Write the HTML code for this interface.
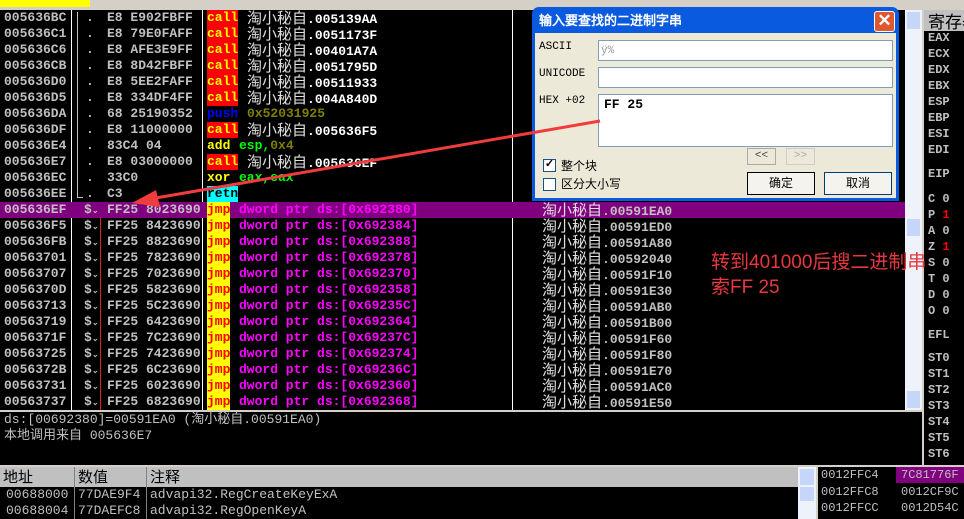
<!DOCTYPE html>
<html><head><meta charset="utf-8"><style>
*{margin:0;padding:0;box-sizing:border-box}
body{width:964px;height:519px;overflow:hidden;background:#000;position:relative;font-family:"Liberation Mono","WenQuanYi Zen Hei",monospace;font-size:13px;font-weight:bold;color:#c0c0c0}
.a{position:absolute;white-space:pre;line-height:16px}
.r{position:absolute;left:0;width:905px;height:16px}
.cj{font-family:"WenQuanYi Zen Hei","Noto Sans CJK SC",monospace;font-weight:normal;color:#e0e0e0}
.b{position:absolute;background:#c0c0c0}
</style></head><body>
<div class="b" style="left:0;top:0;width:964px;height:10px;background:#d4d0c8"></div>
<div class="b" style="left:0;top:0;width:90px;height:7px;background:#ffff00"></div>
<div class="b" style="left:71px;top:10px;width:1px;height:400px;background:#fff"></div>
<div class="b" style="left:202px;top:10px;width:1px;height:400px;background:#fff"></div>
<div class="b" style="left:512px;top:10px;width:1px;height:400px;background:#fff"></div>
<div class="b" style="left:77px;top:12px;width:1px;height:186px;background:#c0c0c0"></div>
<div class="b" style="left:77px;top:197px;width:6px;height:1px;background:#c0c0c0"></div>
<div class="b" style="left:100px;top:210px;width:1px;height:200px;background:#e02020"></div>
<div class="r" style="top:202px;background:#800080"></div>
<div class="b" style="left:905px;top:10px;width:17px;height:400px;background:#eef2fb"></div>
<div class="b" style="left:907px;top:12px;width:13px;height:17px;background:#c6d6f8"></div>
<div class="b" style="left:907px;top:219px;width:13px;height:17px;background:#c6d6f8"></div>
<div class="b" style="left:907px;top:391px;width:13px;height:17px;background:#c6d6f8"></div>
<div class="b" style="left:922px;top:10px;width:2px;height:455px;background:#d4d0c8"></div>
<div id="rows"></div>
<div class="b" style="left:0;top:410px;width:922px;height:2px;background:#d4d0c8"></div>
<div class="a" style="left:4px;top:410px;font-weight:normal">ds:[00692380]=00591EA0 (<span class="cj" style="color:#c0c0c0">淘小秘自</span>.00591EA0)</div>
<div class="a" style="left:4px;top:426px;font-weight:normal"><span class="cj" style="color:#c0c0c0">本地调用来自</span> 005636E7</div>
<div class="b" style="left:0;top:465px;width:964px;height:2px;background:#d4d0c8"></div>
<div class="b" style="left:0;top:467px;width:798px;height:20px;background:#c0c0c0"></div>
<div class="b" style="left:74px;top:467px;width:1px;height:52px;background:#808080"></div>
<div class="b" style="left:146px;top:467px;width:1px;height:52px;background:#808080"></div>
<div class="a cj" style="left:3px;top:468px;color:#000;font-size:15px;line-height:18px">地址</div>
<div class="a cj" style="left:78px;top:468px;color:#000;font-size:15px;line-height:18px">数值</div>
<div class="a cj" style="left:150px;top:468px;color:#000;font-size:15px;line-height:18px">注释</div>
<div class="a" style="left:6px;top:487px;font-weight:normal">00688000</div><div class="a" style="left:78px;top:487px;font-weight:normal">77DAE9F4</div><div class="a" style="left:150px;top:487px;font-weight:normal">advapi32.RegCreateKeyExA</div>
<div class="a" style="left:6px;top:503px;font-weight:normal">00688004</div><div class="a" style="left:78px;top:503px;font-weight:normal">77DAEFC8</div><div class="a" style="left:150px;top:503px;font-weight:normal">advapi32.RegOpenKeyA</div>
<div class="b" style="left:798px;top:467px;width:18px;height:52px;background:#eef2fb"></div>
<div class="b" style="left:800px;top:469px;width:14px;height:16px;background:#c6d6f8"></div>
<div class="b" style="left:800px;top:487px;width:14px;height:14px;background:#c6d6f8"></div>
<div class="b" style="left:816px;top:467px;width:2px;height:52px;background:#d4d0c8"></div>
<div class="b" style="left:896px;top:467px;width:68px;height:16px;background:#800080"></div>
<div class="a" style="left:821px;top:467px;font-weight:normal;font-size:12px">0012FFC4</div><div class="a" style="left:901px;top:467px;font-weight:normal;font-size:12px">7C81776F</div>
<div class="a" style="left:821px;top:484px;font-weight:normal;font-size:12px">0012FFC8</div><div class="a" style="left:901px;top:484px;font-weight:normal;font-size:12px">0012CF9C</div>
<div class="a" style="left:821px;top:500px;font-weight:normal;font-size:12px">0012FFCC</div><div class="a" style="left:901px;top:500px;font-weight:normal;font-size:12px">0012D54C</div>
<div class="b" style="left:924px;top:10px;width:40px;height:21px;background:#c0c0c0"></div>
<div class="a cj" style="left:928px;top:11px;color:#000;font-size:17px;line-height:20px">寄存器</div>
<div id="regs"></div>
<div class="a" style="left:711px;top:250px;color:#e8383d;font-family:'WenQuanYi Zen Hei','Liberation Sans',sans-serif;font-size:19px;line-height:25px;font-weight:normal">转到401000后搜二进制串<br>索FF 25</div>
<div class="b" style="left:532px;top:7px;width:367px;height:194px;background:#0a5ae0;border-radius:7px 7px 0 0"></div>
<div class="a" style="left:539px;top:12px;color:#fff;font-family:'WenQuanYi Zen Hei',sans-serif;font-size:13px;line-height:18px">输入要查找的二进制字串</div>
<div class="b" style="left:874px;top:11px;width:21px;height:21px;background:#e0562e;border:1px solid #fff;border-radius:3px;color:#fff;font-size:17px;line-height:18px;text-align:center;font-family:'Liberation Sans'">✕</div>
<div class="b" style="left:535px;top:33px;width:361px;height:165px;background:#ece9d8"></div>
<div class="a" style="left:539px;top:39px;color:#000;font-size:11px;font-weight:normal">ASCII</div>
<div class="a" style="left:539px;top:66px;color:#000;font-size:11px;font-weight:normal">UNICODE</div>
<div class="a" style="left:539px;top:93px;color:#000;font-size:11px;font-weight:normal">HEX +02</div>
<div class="b" style="left:598px;top:40px;width:295px;height:21px;background:#fff;border:1px solid #7f9db9"></div>
<div class="a" style="left:601px;top:43px;color:#999;font-size:11px;font-weight:normal">ÿ%</div>
<div class="b" style="left:598px;top:67px;width:295px;height:21px;background:#fff;border:1px solid #7f9db9"></div>
<div class="b" style="left:598px;top:94px;width:295px;height:53px;background:#fff;border:1px solid #7f9db9"></div>
<div class="a" style="left:604px;top:97px;color:#000;font-size:13px">FF 25</div>
<div class="b" style="left:747px;top:148px;width:29px;height:17px;background:#ece9d8;border:1px solid #aaa;color:#444;font-size:11px;line-height:14px;text-align:center;font-weight:normal">&lt;&lt;</div>
<div class="b" style="left:786px;top:148px;width:29px;height:17px;background:#ece9d8;border:1px solid #ccc;color:#aaa;font-size:11px;line-height:14px;text-align:center;font-weight:normal">&gt;&gt;</div>
<div class="b" style="left:543px;top:159px;width:13px;height:13px;background:#fff;border:1px solid #1c5180;color:#000;font-size:11px;line-height:11px;text-align:center">✓</div>
<div class="a cj" style="left:561px;top:158px;color:#000;font-size:12px">整个块</div>
<div class="b" style="left:543px;top:178px;width:13px;height:13px;background:#fff;border:1px solid #1c5180"></div>
<div class="a cj" style="left:561px;top:176px;color:#000;font-size:12px">区分大小写</div>
<div class="b" style="left:747px;top:172px;width:68px;height:23px;background:#f4f3ee;border:1px solid #000;color:#000;font-size:12px;line-height:20px;text-align:center;font-family:'WenQuanYi Zen Hei',sans-serif;font-weight:normal">确定</div>
<div class="b" style="left:824px;top:172px;width:68px;height:23px;background:#f4f3ee;border:1px solid #003c74;color:#000;font-size:12px;line-height:20px;text-align:center;font-family:'WenQuanYi Zen Hei',sans-serif;font-weight:normal">取消</div>
<svg style="position:absolute;left:0;top:0" width="964" height="519"><line x1="600" y1="121" x2="150" y2="199" stroke="#f03c3c" stroke-width="3"/><polygon points="132,203 156,190 160,207" fill="#f03c3c"/></svg>
<script>
var d=[["005636BC","E8 E902FBFF","call",".005139AA"],["005636C1","E8 79E0FAFF","call",".0051173F"],["005636C6","E8 AFE3E9FF","call",".00401A7A"],["005636CB","E8 8D42FBFF","call",".0051795D"],["005636D0","E8 5EE2FAFF","call",".00511933"],["005636D5","E8 334DF4FF","call",".004A840D"],["005636DA","68 25190352","push",""],["005636DF","E8 11000000","call",".005636F5"],["005636E4","83C4 04","add",""],["005636E7","E8 03000000","call",".005636EF"],["005636EC","33C0","xor",""],["005636EE","C3","retn",""]];
var j=[["005636EF","80","380","00591EA0"],["005636F5","84","384","00591ED0"],["005636FB","88","388","00591A80"],["00563701","78","378","00592040"],["00563707","70","370","00591F10"],["0056370D","58","358","00591E30"],["00563713","5C","35C","00591AB0"],["00563719","64","364","00591B00"],["0056371F","7C","37C","00591F60"],["00563725","74","374","00591F80"],["0056372B","6C","36C","00591E70"],["00563731","60","360","00591AC0"],["00563737","68","368","00591E50"]];
var h="";
d.forEach(function(r,i){var t=10+i*16;h+='<div class="a" style="left:4px;top:'+t+'px">'+r[0]+'</div><div class="a" style="left:107px;top:'+t+'px">'+r[1]+'</div><div class="a" style="left:86px;top:'+t+'px">.</div>';
var m=r[2],bg=m=="call"?"#ff0000":m=="retn"?"#00ffff":"transparent",c=m=="call"?"#ffff00":m=="push"?"#0000ff":m=="retn"?"#000":"#ffff00";
h+='<div class="a" style="left:207px;top:'+t+'px;background:'+bg+';color:'+c+'">'+m+'</div>';
if(r[3])h+='<div class="a" style="left:247px;top:'+t+'px"><span class="cj" style="font-size:15px">淘小秘自</span><span style="color:#fff">'+r[3]+'</span></div>';
if(m=="push")h+='<div class="a" style="left:247px;top:'+t+'px;color:#808000">0x52031925</div>';
if(m=="add")h+='<div class="a" style="left:239px;top:'+t+'px;color:#00ff00">esp,<span style="color:#808000">0x4</span></div>';
if(m=="xor")h+='<div class="a" style="left:239px;top:'+t+'px;color:#00ff00">eax,eax</div>';});
j.forEach(function(r,i){var t=202+i*16;h+='<div class="a" style="left:4px;top:'+t+'px">'+r[0]+'</div><div class="a" style="left:84px;top:'+t+'px">$<span style="font-size:8px">⌄</span></div><div class="a" style="left:107px;top:'+t+'px">FF25 '+r[1]+'23690</div><div class="a" style="left:207px;top:'+t+'px;background:#ffff00;color:#ff0000;width:23px">jmp</div><div class="a" style="left:239px;top:'+t+'px;color:#ff00ff">dword ptr ds:[0x692'+r[2]+']</div><div class="a" style="left:542px;top:'+t+'px"><span class="cj" style="font-size:15px">淘小秘自</span>.'+r[3]+'</div>';});
document.getElementById("rows").innerHTML=h;
var g=[["EAX",30],["ECX",46],["EDX",62],["EBX",78],["ESP",94],["EBP",110],["ESI",126],["EDI",142],["EIP",166],["C 0",191],["P 1",207],["A 0",223],["Z 1",239],["S 0",255],["T 0",271],["D 0",287],["O 0",303],["EFL",327],["ST0",350],["ST1",366],["ST2",382],["ST3",398],["ST4",414],["ST5",430],["ST6",446]];
var s="";g.forEach(function(r){s+='<div class="a" style="left:928px;top:'+r[1]+'px;font-size:12px">'+r[0].replace(" 1",' <span style="color:#f00">1</span>')+'</div>';});
document.getElementById("regs").innerHTML=s;
</script>
</body></html>
